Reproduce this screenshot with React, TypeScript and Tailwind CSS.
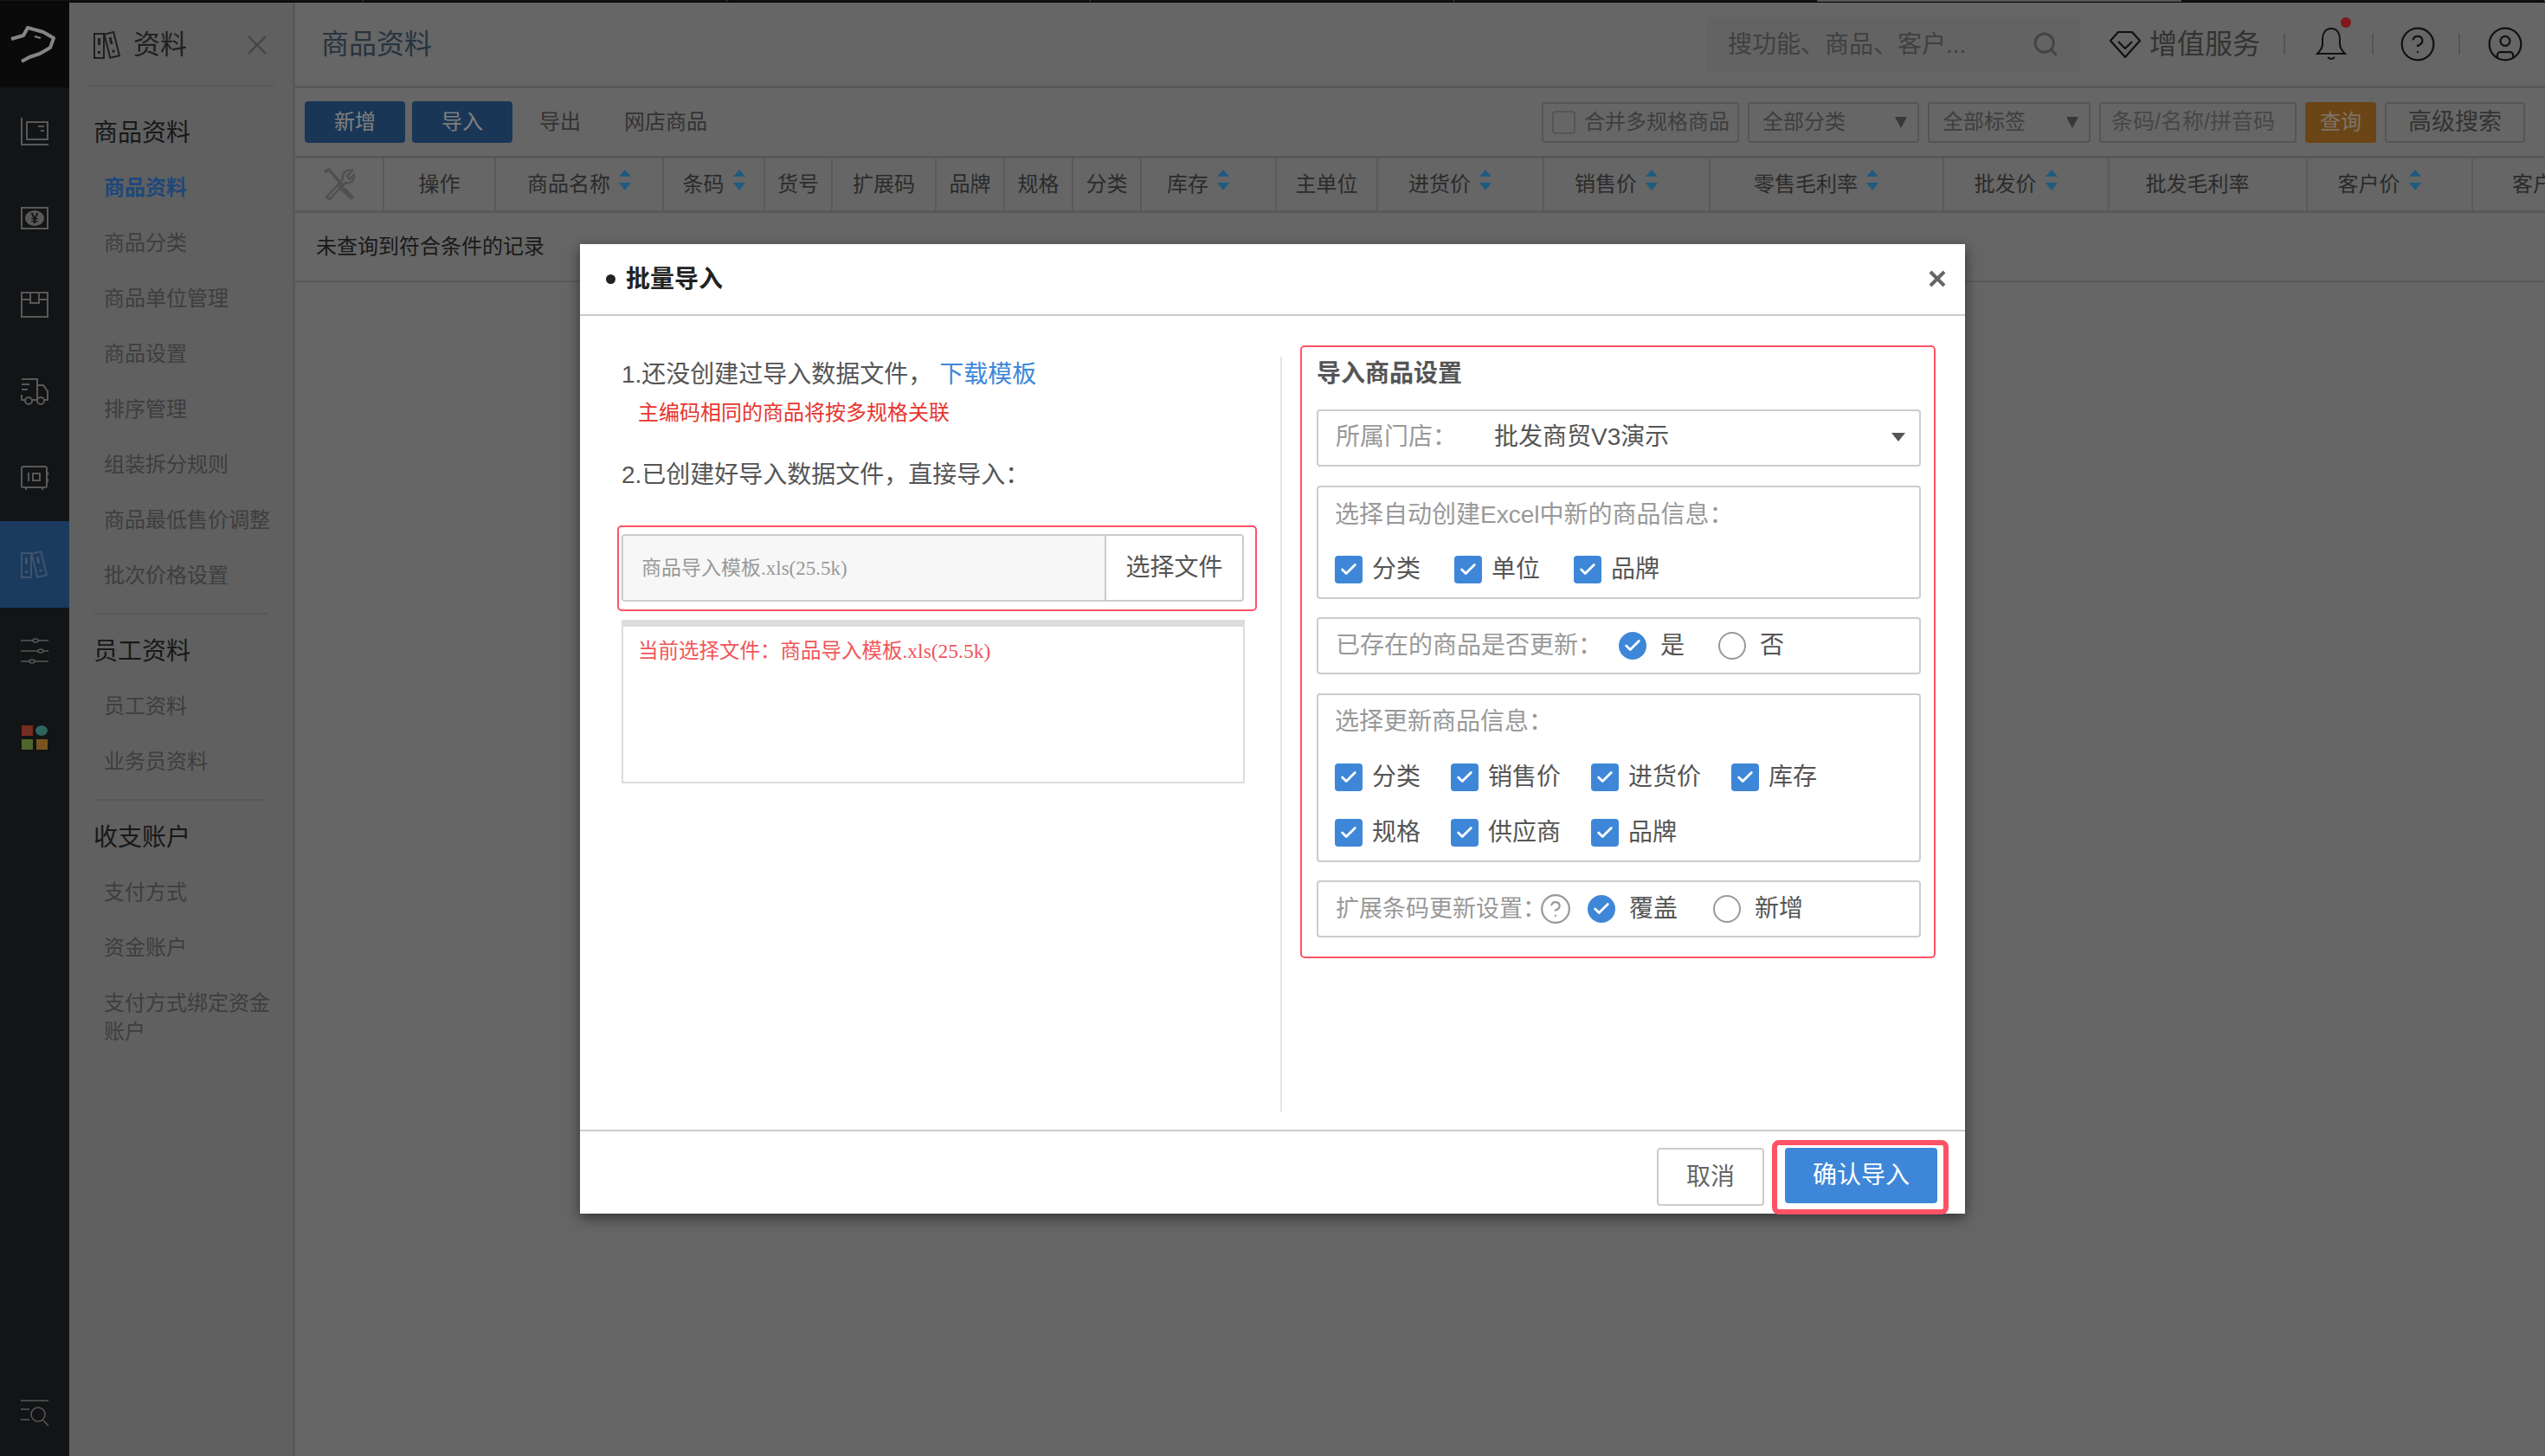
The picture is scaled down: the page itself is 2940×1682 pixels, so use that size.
import { Check, CircleHelp, CircleUser, Search } from "lucide-react";
import type { ReactNode } from "react";

const sections = [
  {
    title: "商品资料",
    items: ["商品资料", "商品分类", "商品单位管理", "商品设置", "排序管理", "组装拆分规则", "商品最低售价调整", "批次价格设置"],
  },
  { title: "员工资料", items: ["员工资料", "业务员资料"] },
  { title: "收支账户", items: ["支付方式", "资金账户"] },
];

const columns = [
  { label: "操作", width: "w-[129px]" },
  { label: "商品名称", width: "w-[194px]", sort: true },
  { label: "条码", width: "w-[117px]", sort: true },
  { label: "货号", width: "w-[78px]" },
  { label: "扩展码", width: "w-[120px]" },
  { label: "品牌", width: "w-[79px]" },
  { label: "规格", width: "w-[79px]" },
  { label: "分类", width: "w-[79px]" },
  { label: "库存", width: "w-[156px] pr-[24px]", sort: true },
  { label: "主单位", width: "w-[117px]" },
  { label: "进货价", width: "w-[192px] pr-[24px]", sort: true },
  { label: "销售价", width: "w-[192px] pr-[24px]", sort: true },
  { label: "零售毛利率", width: "w-[270px] pr-[24px]", sort: true },
  { label: "批发价", width: "w-[191px] pr-[24px]", sort: true },
  { label: "批发毛利率", width: "w-[229px] pr-[24px]" },
  { label: "客户价", width: "w-[191px] pr-[24px]", sort: true },
];

function BinderIcon({ className }: { className: string }) {
  return (
    <svg viewBox="0 0 32 32" fill="none" stroke="currentColor" strokeWidth="2" className={className}>
      <rect x="1" y="3" width="11" height="28" />
      <rect x="5" y="8" width="3" height="8" fill="currentColor" stroke="none" />
      <rect x="5" y="23" width="3" height="3" fill="currentColor" stroke="none" />
      <g transform="rotate(-14 21 17)">
        <rect x="16" y="2" width="11" height="28" />
        <rect x="20" y="7" width="3" height="8" fill="currentColor" stroke="none" />
        <rect x="20" y="22" width="3" height="3" fill="currentColor" stroke="none" />
      </g>
    </svg>
  );
}

function RailRow({ children, active }: { children: ReactNode; active?: boolean }) {
  return (
    <div className={`flex h-[100px] items-center justify-center ${active ? "bg-[#3474bc] text-[#7fa8d8]" : "text-[#b0b0b0]"}`}>
      {children}
    </div>
  );
}

function Rail() {
  return (
    <aside className="flex h-full w-[80px] shrink-0 flex-col bg-[#25282c]">
      <div className="flex h-[99px] items-center justify-center border-b border-[#2a2a2a] bg-[#141414]">
        <svg viewBox="0 0 60 46" fill="none" stroke="#ffffff" strokeWidth="4" strokeLinejoin="round" className="relative z-20 h-[46px] w-[60px] opacity-50">
          <path d="M3 16 L17 12 L22 3 L40 8 L52 15 L48 26 L36 33 L24 37 L15 42" />
          <path d="M30 13 L37 15" strokeWidth="2" />
        </svg>
      </div>
      <RailRow>
        <svg viewBox="0 0 32 32" fill="none" stroke="currentColor" strokeWidth="2" className="h-8 w-8">
          <path d="M1 0 V31 H32" />
          <rect x="7" y="5" width="24" height="20" />
          <path d="M20 10 H27 M23 15 H27" />
        </svg>
      </RailRow>
      <RailRow>
        <svg viewBox="0 0 32 32" fill="none" stroke="currentColor" strokeWidth="2" className="h-8 w-8">
          <path d="M1 4 H31 V28 H1 Z" />
          <ellipse cx="16" cy="16" rx="11" ry="9" fill="currentColor" stroke="none" />
          <text x="16" y="22" textAnchor="middle" fontSize="16" fontWeight="700" fill="#25282c" stroke="none">¥</text>
        </svg>
      </RailRow>
      <RailRow>
        <svg viewBox="0 0 32 32" fill="none" stroke="currentColor" strokeWidth="2" className="h-8 w-8">
          <rect x="1" y="2" width="30" height="28" />
          <path d="M1 10 H11 V2 M21 2 V10 H31 M11 10 L11 14 H21 V10" />
        </svg>
      </RailRow>
      <RailRow>
        <svg viewBox="0 0 32 32" fill="none" stroke="currentColor" strokeWidth="2" className="h-8 w-8">
          <path d="M1 2 H19 V26 M19 9 H26 L31 16 V26 H27 M19 26 H13 M5 26 H1 V20 M1 8 H10 M1 14 H8" />
          <circle cx="9" cy="27" r="4" />
          <circle cx="23" cy="27" r="4" />
        </svg>
      </RailRow>
      <RailRow>
        <svg viewBox="0 0 32 32" fill="none" stroke="currentColor" strokeWidth="2" className="h-8 w-8">
          <rect x="1" y="3" width="29" height="24" rx="2" />
          <path d="M9 10 V20 M6 27 V30 M25 27 V30 M31 9 V13 M31 17 V21" />
          <rect x="14" y="11" width="8" height="8" />
        </svg>
      </RailRow>
      <RailRow active>
        <BinderIcon className="h-8 w-8" />
      </RailRow>
      <RailRow>
        <svg viewBox="0 0 32 32" fill="none" stroke="currentColor" strokeWidth="1.5" className="h-8 w-8">
          <path d="M0 4 H32 M0 16 H32 M0 28 H32" />
          <ellipse cx="17" cy="4" rx="3" ry="2" fill="#25282c" />
          <ellipse cx="23" cy="16" rx="3" ry="2" fill="#25282c" />
          <ellipse cx="13" cy="28" rx="3" ry="2" fill="#25282c" />
        </svg>
      </RailRow>
      <RailRow>
        <svg viewBox="0 0 30 28" className="h-[28px] w-[30px]">
          <rect x="0" y="0" width="13" height="12" fill="#e85a3c" />
          <ellipse cx="23" cy="6" rx="7" ry="6" fill="#5ec8ba" />
          <rect x="0" y="16" width="13" height="12" fill="#9ecc54" />
          <rect x="17" y="16" width="13" height="12" fill="#f0aa40" />
        </svg>
      </RailRow>
      <div className="mt-auto">
        <RailRow>
          <svg viewBox="0 0 32 32" fill="none" stroke="currentColor" strokeWidth="1.5" className="h-8 w-8">
            <path d="M0 2 H32 M0 12 H10 M0 24 H10 M26 25 L32 31" />
            <circle cx="20" cy="18" r="8" />
          </svg>
        </RailRow>
      </div>
    </aside>
  );
}

function Sidebar() {
  return (
    <aside className="h-full w-[261px] shrink-0 border-r-[3px] border-[#b0b0b0] bg-[#c0c0c0]">
      <div className="mx-[20px] flex h-[97px] items-center justify-between border-b-2 border-[#b4b4b4] pl-[8px] pr-[10px] pt-[2px]">
        <div className="flex items-center gap-[14px] text-[#404040]">
          <BinderIcon className="h-[32px] w-[32px]" />
          <span className="text-[31px] leading-[40px]">资料</span>
        </div>
        <svg viewBox="0 0 20 20" stroke="#8a8a8a" strokeWidth="2" className="h-[22px] w-[22px]">
          <path d="M1 1 L19 19 M19 1 L1 19" />
        </svg>
      </div>
      <div className="mt-[21px] pl-[28px] pr-[29px]">
        {sections.map((section, index) => (
          <section key={section.title} className={index > 0 ? "mt-[11px] border-t-2 border-[#b0b0b0] pt-[10px]" : ""}>
            <h2 className="flex h-[64px] items-center pt-[2px] text-[28px] text-[#303030]">{section.title}</h2>
            {section.items.map((item, itemIndex) => (
              <div
                key={item}
                className={`flex h-[64px] items-center whitespace-nowrap pl-[12px] text-[24px] ${index === 0 && itemIndex === 0 ? "font-bold text-[#3d8ff5]" : "text-[#7c7c7c]"}`}
              >
                {item}
              </div>
            ))}
            {index === 2 ? (
              <div className="w-[206px] pl-[12px] pt-[15px] text-[24px] leading-[33px] text-[#7c7c7c]">支付方式绑定资金账户</div>
            ) : null}
          </section>
        ))}
      </div>
    </aside>
  );
}

function SortArrows() {
  return (
    <svg viewBox="0 0 14 24" className="mb-[10px] h-[24px] w-[14px]" fill="#3eb4ff">
      <path d="M7 0 L14 8 H0 Z M0 15 H14 L7 24 Z" />
    </svg>
  );
}

function Caret({ className }: { className: string }) {
  return (
    <svg viewBox="0 0 14 16" className={`h-[16px] w-[14px] ${className}`} fill="currentColor">
      <path d="M0 2 H14 L7 15 Z" />
    </svg>
  );
}

function Main() {
  return (
    <main className="min-w-0 flex-1 bg-[#cccccc]">
      <header className="flex h-[99px] items-center border-b-[3px] border-[#b0b0b0] pl-[30px]">
        <h1 className="text-[32px] text-[#4c687e]">商品资料</h1>
        <div className="ml-auto flex h-[63px] w-[431px] items-center justify-between bg-[#c6c6c6] pl-[24px] pr-[24px] text-[28px] text-[#808080]">
          <span className="pt-[2px]">搜功能、商品、客户...</span>
          <Search size={32} strokeWidth={2.2} className="text-[#888888]" />
        </div>
        <div className="ml-[34px] flex items-center text-[#222222]">
          <svg viewBox="0 0 36 32" fill="none" stroke="currentColor" strokeWidth="2.2" strokeLinejoin="round" className="h-[32px] w-[36px]">
            <path d="M10 2 H26 L35 12 L18 31 L1 12 Z" />
            <path d="M10 13 L18 21 L26 13" />
          </svg>
          <span className="ml-[10px] text-[32px] leading-[40px] text-[#666666]">增值服务</span>
          <span className="ml-[27px] h-[24px] w-[2px] bg-[#aaaaaa]" />
          <span className="relative ml-[35px] block h-[38px] w-[36px]">
            <svg viewBox="0 0 36 38" fill="none" stroke="currentColor" strokeWidth="2" className="h-[38px] w-[36px]">
              <path d="M18 1 C11 1 8 7 8 13 V19 C8 24 5 27 2 30 H34 C31 27 28 24 28 19 V13 C28 7 25 1 18 1 Z" />
              <path d="M14 34 Q18 38 22 34" />
            </svg>
            <span className="absolute -top-[12px] right-[-5px] h-[12px] w-[12px] rounded-full bg-[#ff3434]" />
          </span>
          <span className="ml-[29px] h-[24px] w-[2px] bg-[#aaaaaa]" />
          <CircleHelp size={44} strokeWidth={1.2} className="ml-[29px]" />
          <span className="ml-[25px] h-[24px] w-[2px] bg-[#aaaaaa]" />
          <CircleUser size={44} strokeWidth={1.2} className="ml-[30px] mr-[24px]" />
        </div>
      </header>

      <div className="flex h-[81px] items-center border-b-[3px] border-[#b0b0b0] pl-[11px] pr-[23px] text-[24px]">
        <button className="h-[48px] w-[116px] rounded-[4px] bg-[#326cac] text-white">新增</button>
        <button className="ml-[8px] h-[48px] w-[116px] rounded-[4px] bg-[#326cac] text-white">导入</button>
        <span className="ml-[31px] text-[#666666]">导出</span>
        <span className="ml-[50px] text-[#666666]">网店商品</span>
        <div className="ml-auto flex h-[47px] gap-[10px] text-[#7c7c7c]">
          <label className="flex w-[228px] items-center rounded-[3px] border-2 border-[#aaaaaa] pl-[10px]">
            <span className="h-[27px] w-[27px] rounded-[4px] border-2 border-[#aaaaaa]" />
            <span className="ml-[10px] whitespace-nowrap">合并多规格商品</span>
          </label>
          <div className="flex w-[198px] items-center justify-between rounded-[3px] border-2 border-[#aaaaaa] pl-[15px] pr-[12px]">
            全部分类
            <Caret className="text-[#707070]" />
          </div>
          <div className="flex w-[188px] items-center justify-between rounded-[3px] border-2 border-[#aaaaaa] pl-[15px] pr-[12px]">
            全部标签
            <Caret className="text-[#707070]" />
          </div>
          <div className="flex w-[228px] items-center whitespace-nowrap rounded-[3px] border-2 border-[#aaaaaa] pl-[12px] text-[25px] text-[#8c8c8c]">
            条码/名称/拼音码
          </div>
          <button className="w-[82px] rounded-[3px] bg-[#d68a2c] text-white/80">查询</button>
          <button className="w-[162px] rounded-[3px] border-2 border-[#aaaaaa] text-[27px] text-[#666666]">高级搜索</button>
        </div>
      </div>

      <div className="flex h-[63px] overflow-hidden border-b-[3px] border-[#b0b0b0] text-[24px] text-[#565656]">
        <div className="flex w-[103px] shrink-0 items-center justify-center border-r-2 border-[#b4b4b4]">
          <svg viewBox="0 0 38 38" fill="none" stroke="#a0a0a0" strokeWidth="3.5" strokeLinecap="round" className="h-[38px] w-[38px]">
            <path d="M3 4 L7 2 L21 18" />
            <path d="M20 22 L33 34 M26 26 L31 32" strokeWidth="5" />
            <path d="M4 34 L23 13 C21 7 27 1 34 3 L28 9 L31 13 L36 8 C37 15 31 19 26 17 L8 36 Z" strokeWidth="2.5" />
          </svg>
        </div>
        {columns.map((column) => (
          <div key={column.label} className={`flex shrink-0 items-center justify-center gap-[10px] border-r-2 border-[#b4b4b4] ${column.width}`}>
            <span className="whitespace-nowrap">{column.label}</span>
            {column.sort ? <SortArrows /> : null}
          </div>
        ))}
        <div className="flex shrink-0 items-center pl-[45px]">
          <span className="whitespace-nowrap">客户价</span>
        </div>
      </div>

      <div className="flex h-[80px] items-center border-b-2 border-[#b4b4b4] pl-[24px] text-[24px] text-[#343434]">
        未查询到符合条件的记录
      </div>
    </main>
  );
}

function CheckBox({ label }: { label: string }) {
  return (
    <span className="flex items-center text-[28px] leading-[32px] text-[#555555]">
      <span className="flex h-[32px] w-[32px] items-center justify-center rounded-[4px] bg-[#3e87d8]">
        <Check size={22} strokeWidth={3} className="text-white" />
      </span>
      <span className="ml-[11px]">{label}</span>
    </span>
  );
}

function Radio({ label, checked, className }: { label: string; checked?: boolean; className?: string }) {
  return (
    <span className={`flex items-center text-[28px] leading-[32px] text-[#555555] ${className ?? ""}`}>
      {checked ? (
        <span className="flex h-[32px] w-[32px] items-center justify-center rounded-full bg-[#3e87d8]">
          <Check size={22} strokeWidth={3} className="text-white" />
        </span>
      ) : (
        <span className="h-[32px] w-[32px] rounded-full border-2 border-[#999999]" />
      )}
      <span className="ml-[16px]">{label}</span>
    </span>
  );
}

function ImportModal() {
  return (
    <div className="absolute left-[670px] top-[282px] z-20 flex h-[1120px] w-[1600px] flex-col bg-white shadow-[0_5px_15px_rgba(0,0,0,0.5)]">
      <div className="flex h-[83px] shrink-0 items-center justify-between border-b-2 border-[#cccccc] pl-[30px] pr-[22px]">
        <div className="flex items-center gap-[12px] text-[28px] font-bold text-[#222222]">
          <span className="h-[11px] w-[11px] rounded-full bg-[#222222]" />
          批量导入
        </div>
        <svg viewBox="0 0 20 20" stroke="#666666" strokeWidth="4" className="mb-[2px] h-[20px] w-[20px]">
          <path d="M2 2 L18 18 M18 2 L2 18" />
        </svg>
      </div>

      <div className="flex min-h-0 flex-1">
        <div className="w-[809px] shrink-0 pl-[48px] pt-[48px]">
          <p className="flex h-[40px] items-center text-[28px] text-[#555555]">
            1.还没创建过导入数据文件，
            <a className="ml-[8px] text-[#3e87d8]">下载模板</a>
          </p>
          <p className="mt-[6px] h-[36px] pl-[19px] text-[24px] leading-[36px] text-[#e8352e]">主编码相同的商品将按多规格关联</p>
          <p className="mt-[34px] flex h-[40px] items-center text-[28px] text-[#555555]">2.已创建好导入数据文件，直接导入：</p>

          <div className="ml-[-5px] mt-[38px] h-[99px] w-[739px] rounded-[5px] border-2 border-[#ff5266] pl-[3px] pt-[8px]">
            <div className="flex h-[78px] w-[719px] rounded-[4px] border-2 border-[#cccccc]">
              <div className="flex flex-1 items-center border-r-2 border-[#cccccc] bg-[#f7f7f7] pl-[21px] pt-[2px] font-['Liberation_Serif','Noto_Sans_CJK_SC',serif] text-[23px] text-[#999999]">
                商品导入模板.xls(25.5k)
              </div>
              <button className="w-[157px] text-[28px] text-[#555555]">选择文件</button>
            </div>
          </div>

          <div className="mt-[10px] h-[189px] w-[720px] border-2 border-t-[8px] border-[#dddddd] pl-[17px] pt-[10px] font-['Liberation_Serif','Noto_Sans_CJK_SC',serif] text-[23.5px] leading-[36px] text-[#f0555a]">
            当前选择文件：商品导入模板.xls(25.5k)
          </div>
        </div>

        <div className="mb-[21px] mt-[47px] w-[2px] shrink-0 bg-[#e5e5e5]" />

        <div className="ml-[21px] mt-[34px] h-[708px] w-[734px] shrink-0 rounded-[5px] border-2 border-[#ff5266] pl-[17px] pt-[11px]">
          <h3 className="flex h-[40px] items-center text-[28px] font-bold text-[#555555]">导入商品设置</h3>

          <div className="mt-[21px] flex h-[66px] w-[698px] items-center rounded-[4px] border-2 border-[#cccccc] pb-[2px] pl-[20px] pr-[16px] text-[28px] text-[#555555]">
            <span className="w-[183px] text-[#999999]">所属门店：</span>
            批发商贸V3演示
            <svg viewBox="0 0 16 12" className="ml-auto h-[12px] w-[16px]" fill="#555555">
              <path d="M0 1 H16 L8 11 Z" />
            </svg>
          </div>

          <div className="mt-[22px] h-[131px] w-[698px] rounded-[4px] border-2 border-[#cccccc] pl-[19px] pt-[14px]">
            <p className="h-[36px] whitespace-nowrap text-[28px] leading-[36px] text-[#999999]">选择自动创建Excel中新的商品信息：</p>
            <div className="mt-[29px] grid grid-cols-[138px_138px_auto]">
              {["分类", "单位", "品牌"].map((label) => (
                <CheckBox key={label} label={label} />
              ))}
            </div>
          </div>

          <div className="mt-[21px] flex h-[66px] w-[698px] items-center rounded-[4px] border-2 border-[#cccccc] pl-[20px]">
            <span className="w-[327px] whitespace-nowrap text-[28px] text-[#999999]">已存在的商品是否更新：</span>
            <Radio label="是" checked className="w-[115px]" />
            <Radio label="否" />
          </div>

          <div className="mt-[22px] h-[195px] w-[698px] rounded-[4px] border-2 border-[#cccccc] pl-[19px] pt-[13px]">
            <p className="h-[36px] text-[28px] leading-[36px] text-[#999999]">选择更新商品信息：</p>
            <div className="mt-[30px] grid grid-cols-[134px_162px_162px_auto] gap-y-[32px]">
              {["分类", "销售价", "进货价", "库存", "规格", "供应商", "品牌"].map((label) => (
                <CheckBox key={label} label={label} />
              ))}
            </div>
          </div>

          <div className="mt-[21px] flex h-[66px] w-[698px] items-center rounded-[4px] border-2 border-[#cccccc] pl-[20px]">
            <span className="w-[235px] whitespace-nowrap text-[27px] text-[#999999]">扩展条码更新设置：</span>
            <CircleHelp size={38} strokeWidth={1.4} className="text-[#999999]" />
            <Radio label="覆盖" checked className="ml-[18px] w-[145px]" />
            <Radio label="新增" />
          </div>
        </div>
      </div>

      <div className="flex h-[97px] shrink-0 justify-end border-t-2 border-[#cccccc] pr-[19px] pt-[10px]">
        <button className="mt-[9px] h-[67px] w-[124px] rounded-[4px] border-2 border-[#cccccc] text-[28px] text-[#666666]">取消</button>
        <div className="ml-[9px] h-[86px] w-[204px] rounded-[8px] border-[6px] border-[#ff5266] bg-white pb-[7px] pl-[9px] pr-[7px] pt-[3px]">
          <button className="h-[64px] w-[176px] rounded-[4px] bg-[#3e87d8] text-[28px] text-white">确认导入</button>
        </div>
      </div>
    </div>
  );
}

export default function App() {
  return (
    <div className="relative flex h-[1682px] w-[2940px] flex-col overflow-hidden font-['Liberation_Sans','Noto_Sans_CJK_SC',sans-serif]">
      <div className="flex h-[3px] shrink-0 border-b border-black bg-[#222222]">
        {[0, 1, 2, 3, 4, 5, 6].map((tab) => (
          <div key={tab} className={`h-[2px] w-[420px] border-r border-[#888888] ${tab === 5 ? "bg-[#aaaaaa]" : ""}`} />
        ))}
      </div>
      <div className="flex min-h-0 flex-1">
        <Rail />
        <Sidebar />
        <Main />
      </div>
      <div className="absolute inset-0 z-10 bg-black/50" />
      <ImportModal />
    </div>
  );
}
